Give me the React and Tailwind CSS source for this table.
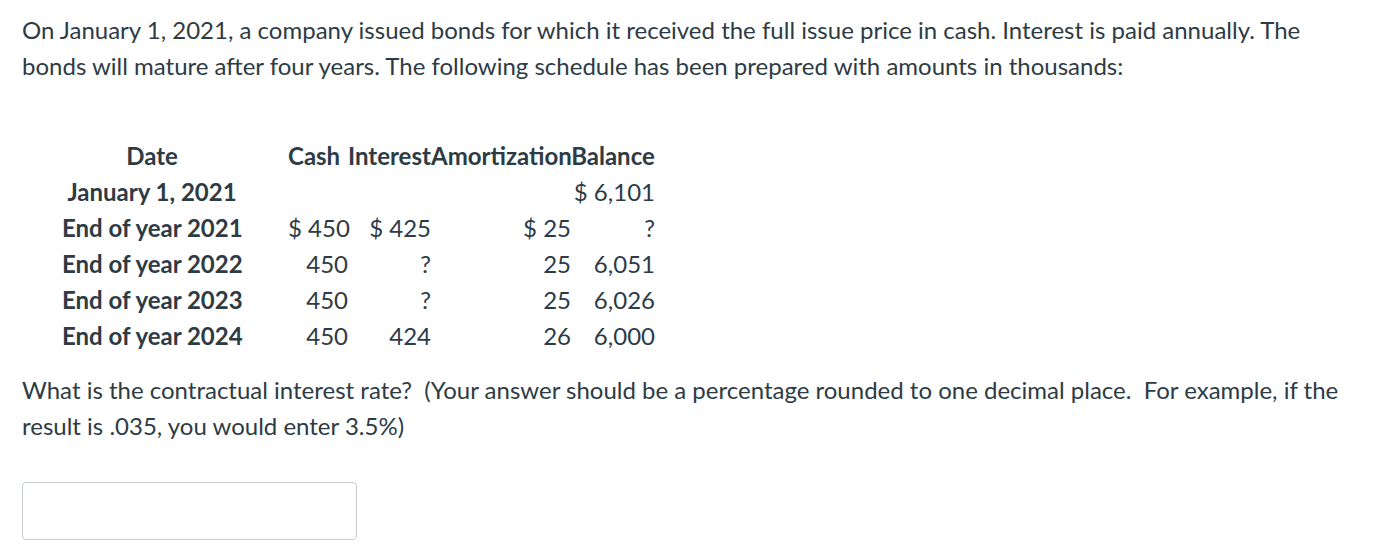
import React from 'react';

const rows = [
  { date: 'January 1, 2021', cash: '', interest: '', amort: '', balance: '$ 6,101' },
  { date: 'End of year 2021', cash: '$ 450', interest: '$ 425', amort: '$ 25', balance: '?' },
  { date: 'End of year 2022', cash: '450', interest: '?', amort: '25', balance: '6,051' },
  { date: 'End of year 2023', cash: '450', interest: '?', amort: '25', balance: '6,026' },
  { date: 'End of year 2024', cash: '450', interest: '424', amort: '26', balance: '6,000' },
];

const cols = 'grid grid-cols-[180px_46px_60px_83px_140px_84px]';

export default function App() {
  return (
    <div className="min-h-[555px] bg-white px-[22px] pt-[12px] text-[#2d3b45] text-[24px] leading-[36px] font-['Lato',sans-serif]">
      <p>
        On January 1, 2021, a company issued bonds for which it received the full issue price in cash. Interest is paid annually. The bonds will mature after four years. The following schedule has been prepared with amounts in thousands:
      </p>

      {/* Schedule */}
      <div className="mt-[54px] ml-[40px]">
        <div className={`${cols} font-bold`}>
          <div className="text-center">Date</div>
          <div />
          <div className="text-left whitespace-nowrap">Cash</div>
          <div className="text-center whitespace-nowrap">Interest</div>
          <div className="text-center whitespace-nowrap">Amortization</div>
          <div className="text-center whitespace-nowrap">Balance</div>
        </div>
        {rows.map((r) => (
          <div key={r.date} className={cols}>
            <div className="text-center font-bold whitespace-nowrap">{r.date}</div>
            <div />
            <div className="text-right whitespace-nowrap">{r.cash}</div>
            <div className="text-right whitespace-nowrap">{r.interest}</div>
            <div className="text-right whitespace-nowrap">{r.amort}</div>
            <div className="text-right whitespace-nowrap">{r.balance}</div>
          </div>
        ))}
      </div>

      <p className="mt-[18px] whitespace-pre-wrap">
        {'What is the contractual interest rate?  (Your answer should be a percentage rounded to one decimal place.  For example, if the result is .035, you would enter 3.5%)'}
      </p>

      <input
        type="text"
        className="mt-[38px] block w-[335px] h-[58px] rounded-[4px] border border-[#c7cdd1] bg-white outline-none"
      />
    </div>
  );
}
